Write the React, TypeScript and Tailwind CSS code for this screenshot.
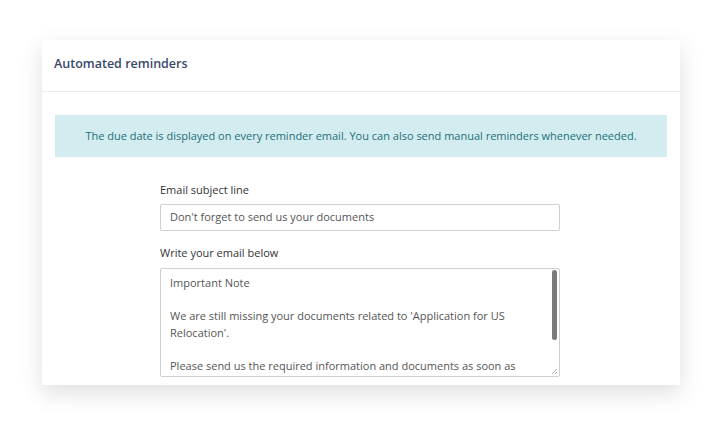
import React from "react";

export default function App() {
  return (
    <div
      className="w-[721px] h-[425px] bg-white overflow-hidden pt-[40px] pl-[42px]"
      style={{ fontFamily: '"Open Sans", "Noto Sans", sans-serif' }}
    >
      <div className="w-[638px] h-[345px] bg-white overflow-hidden shadow-[0_8px_22px_rgba(0,0,0,0.13)]">
        <div className="h-[52px] border-b border-[#ebebeb] flex items-center px-[12px] pb-[3px]">
          <h1 className="text-[12.5px] font-semibold text-[#3a4868]">Automated reminders</h1>
        </div>
        <div className="pt-[23px]">
          <div className="mx-[13px] h-[42px] bg-[#d3ecef] flex items-center justify-center text-[11px] text-[#22707b]">
            The due date is displayed on every reminder email. You can also send manual reminders whenever needed.
          </div>
          <div className="w-[400px] ml-[118px] pt-[24px]">
            <label className="block text-[11px] leading-[18px] text-[#333]">Email subject line</label>
            <div className="mt-[5px] h-[27px] border border-[#cfcfcf] rounded-[2px] flex items-center px-[9px] text-[11px] text-[#555]">
              Don't forget to send us your documents
            </div>
            <label className="block mt-[13px] text-[11px] leading-[18px] text-[#333]">Write your email below</label>
            <div className="relative mt-[6px] h-[109px] border border-[#cfcfcf] rounded-[2px] overflow-hidden pl-[9px] pr-[20px] pt-[6px] text-[11px] leading-[16.5px] text-[#555]">
              <div className="whitespace-nowrap">Important Note</div>
              <div className="h-[16.5px]" />
              <div className="whitespace-nowrap">We are still missing your documents related to 'Application for US</div>
              <div className="whitespace-nowrap">Relocation'.</div>
              <div className="h-[16.5px]" />
              <div className="whitespace-nowrap">Please send us the required information and documents as soon as</div>
              <div className="whitespace-nowrap">possible.</div>
              <div className="absolute right-[2px] top-[1px] w-[5px] h-[70px] rounded-full bg-[#7a7a7a]" />
              <svg className="absolute right-[1px] bottom-[1px]" width="7" height="7" viewBox="0 0 7 7">
                <path d="M6 1 L1 6 M6 4 L4 6" stroke="#9a9a9a" strokeWidth="0.8" />
              </svg>
            </div>
          </div>
        </div>
      </div>
    </div>
  );
}
